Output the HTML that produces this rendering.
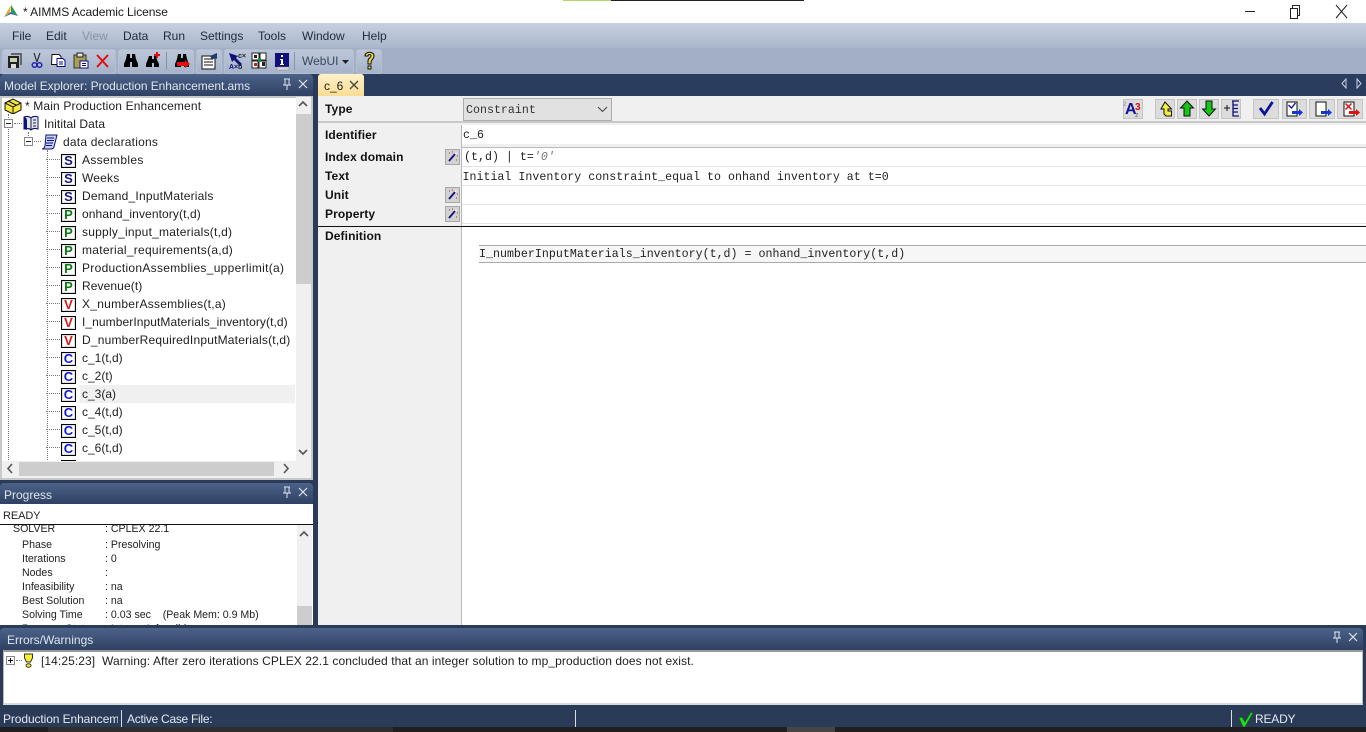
<!DOCTYPE html>
<html><head><meta charset="utf-8">
<style>
html,body{margin:0;padding:0;width:1366px;height:732px;overflow:hidden;background:#2a3b58;font-family:"Liberation Sans",sans-serif;font-size:12px;color:#1a1a1a}
div,span,svg{position:absolute;box-sizing:border-box}
.t{white-space:nowrap;line-height:16px}
.m{top:28px;font-size:12px;color:#1f2a3c}
.hd{background:linear-gradient(#4c6288,#2e4164);border-radius:4px 4px 0 0;}
.ht{color:#dfe5ee;font-size:12px;white-space:nowrap;line-height:16px}
.tb{top:49px;height:25px;background:linear-gradient(#bcc7d9,#a6b3c9);border:1px solid #b4bfd2;border-radius:3px}
.r{left:82px;font-size:12px;white-space:nowrap;line-height:16px;color:#1e1e1e}
.b{left:61px;width:15px;height:14px;border:1px solid #000;background:#fff;box-shadow:inset 0 0 0 1px #ddd;font:bold 13px/12px "Liberation Sans",sans-serif;text-align:center}
.s{color:#15157a}.p{color:#0a7a12}.v{color:#d81818}.c{color:#0a18d8}
.dh{left:46px;width:14px;border-top:1px dotted #777;height:1px}
.lb{left:325px;font:bold 12px/16px "Liberation Sans",sans-serif;color:#111;letter-spacing:.1px}
.mono{font-family:"Liberation Mono",monospace;font-size:11.6px;line-height:14px;white-space:nowrap;color:#222;letter-spacing:.03px}
.wb{left:445px;width:15px;height:16px;background:#d2d2d2;border:1px solid #a8a8a8}
.ib{top:99px;height:20px;background:#dcdcdc;border:1px solid #c4c4c4}
.pg{font-size:10.6px;line-height:14px;white-space:nowrap;color:#222}
.hl{height:1px;background:#e4e4e4}
</style></head><body>

<!-- title bar -->
<div style="left:0;top:0;width:1366px;height:23px;background:#fff"></div>
<div style="left:563px;top:0;width:48px;height:1px;background:#b5d36a"></div>
<div style="left:611px;top:0;width:193px;height:1px;background:#222"></div>
<svg style="left:3px;top:5px" width="16" height="12" viewBox="0 0 16 12"><path d="M8 0L1 12L7 8Z" fill="#e0b030"/><path d="M8 0L15 11L8 7Z" fill="#2a9a50"/><path d="M1 12L8 7L15 11L8 9Z" fill="#2a60b0"/></svg>
<div class="t" style="left:23px;top:4px;color:#1a1a1a;font-size:12px;letter-spacing:-.08px">* AIMMS Academic License</div>
<svg style="left:1240px;top:2px" width="126" height="20" viewBox="0 0 126 20"><path d="M5 9.500H15" stroke="#222" fill="none"/><path d="M50.500 6.500h7v10h-7zM52.500 6.500V3.500h7v10h-2" stroke="#222" fill="none"/><path d="M96 3L107 16M107 3L96 16" stroke="#222" fill="none"/></svg>

<!-- menu -->
<div style="left:0;top:23px;width:1366px;height:25px;background:linear-gradient(#c7d0e1,#aab6cb)"></div>
<div class="t m" style="left:12px">File</div>
<div class="t m" style="left:46px">Edit</div>
<div class="t m" style="left:82px;color:#8a93a3">View</div>
<div class="t m" style="left:123px">Data</div>
<div class="t m" style="left:163px">Run</div>
<div class="t m" style="left:200px">Settings</div>
<div class="t m" style="left:258px">Tools</div>
<div class="t m" style="left:302px">Window</div>
<div class="t m" style="left:362px">Help</div>

<!-- toolbar -->
<div style="left:0;top:48px;width:1366px;height:26px;background:#a2afc6"></div>
<div class="tb" style="left:2px;width:114px"></div>
<div class="tb" style="left:118px;width:76px"></div>
<div class="tb" style="left:196px;width:26px"></div>
<div class="tb" style="left:224px;width:130px"></div>
<div class="tb" style="left:356px;width:26px"></div>
<div style="left:166px;top:52px;width:1px;height:18px;background:#8793a8"></div>
<div style="left:294px;top:52px;width:1px;height:18px;background:#8793a8"></div>
<svg style="left:0;top:48px" width="385" height="26" viewBox="0 0 385 26">
<path d="M8 8h11v12H8z" fill="#222"/><path d="M11 5h11v12h-2V7h-9z" fill="#666"/><path d="M10 10h7v4h-7z" fill="#c8d0b0"/><path d="M11 16h5v4h-5z" fill="#ddd"/>
<path d="M34 5l3 9M40 5l-3 9" stroke="#333" stroke-width="1.200" fill="none"/><circle cx="34.500" cy="17" r="2.300" fill="none" stroke="#1a1ab0" stroke-width="1.400"/><circle cx="39.500" cy="17" r="2.300" fill="none" stroke="#1a1ab0" stroke-width="1.400"/>
<path d="M52 6.500h7l2 2v8H51.500z" fill="#fff" stroke="#111"/><path d="M57 10.500h6l2 2v6h-8z" fill="#fff" stroke="#0a0a90"/><path d="M59 14h4M59 16h4" stroke="#0a0a90"/>
<path d="M74 7h12v13H74z" fill="#a8a050" stroke="#333"/><path d="M77 5h6v4h-6z" fill="#ddd" stroke="#222"/><path d="M80 13h8v7h-8z" fill="#fff" stroke="#0a0a90"/><path d="M82 15.500h4M82 17.500h4" stroke="#0a0a90"/>
<path d="M97 7l11 12M108 7L97 19" stroke="#e01010" stroke-width="2" fill="none"/>
<path d="M127 6h3v4h2V6h3l1 5 2 5v3h-6v-5h-2v5h-6v-3l2-5z" fill="#000"/>
<path d="M149 8h3v3h2V8h2l1 4 2 4v3h-5v-4h-2v4h-6v-3l2-5z" fill="#000"/><path d="M156 4h2v2h2v2h-2v2h-2V8h-2V6h2z" fill="#e01010"/>
<path d="M178 6h3v4h2V6h3l1 5 2 5v3h-5v-4h-3v4h-6v-3l2-5z" fill="#000"/><path d="M177 14h8v-2l5 4-5 4v-2h-8z" fill="#e01010"/>
<path d="M202 8h13v13h-13z" fill="#fff" stroke="#111"/><path d="M204 11h9M204 14h9M204 17h9" stroke="#111"/><path d="M210 8l7-3v6l-2-1-3 2z" fill="#223a70"/>
<path d="M229 5l9 3-2 2 6 6-2 2-6-6-2 2z" fill="#10107a"/><text x="229" y="21" font-family="Liberation Sans" font-size="7" font-weight="bold" fill="#10107a">A×</text><text x="238" y="21" font-family="Liberation Sans" font-size="7" font-weight="bold" fill="#222">b</text><text x="238" y="10" font-family="Liberation Sans" font-size="7" font-weight="bold" fill="#222">c×</text>
<path d="M252 5h7v7h-7zM260 5h6v7h-6zM252 13h6v7h-6zM259 13h7v7h-7z" fill="#fff" stroke="#222"/><path d="M254 7h3v3h-3zM262 14h3v4h-3z" fill="#222"/><path d="M258 10h3v4h-3z" fill="#1a8a3a"/><path d="M254 15h3v3h-3z" fill="#c02020"/>
<path d="M275 5h14v14h-14z" fill="#10107a"/><path d="M281 7h2v2h-2zM280 11h3v5h1v1h-4v-1h1v-4h-1z" fill="#fff"/><path d="M277 19h12v3h-12z" fill="#d8d8d8" stroke="#888" stroke-width=".5"/>
<path d="M365 8c0-5 9-5 9 0 0 3-3 4-3 6v2h-3v-3c0-3 3-3 3-5 0-2-3-2-3 0z" fill="#f4e040" stroke="#111"/><path d="M368 18h3v3h-3z" fill="#f4e040" stroke="#111"/>
</svg>
<div class="t" style="left:302px;top:53px;color:#3a465c">WebUI</div>
<svg style="left:342px;top:60px" width="7" height="4"><path d="M0 0h7L3.500 4z" fill="#222"/></svg>

<!-- model explorer -->
<div class="hd" style="left:0;top:74px;width:313px;height:22px"></div>
<div class="ht" style="left:4px;top:78px;letter-spacing:-.05px">Model Explorer: Production Enhancement.ams</div>
<svg style="left:280px;top:78px" width="30" height="13" viewBox="0 0 30 13"><path d="M4 1h6M5 1v6M9 1v6M3 7h8M7 7v5" stroke="#dfe5ee" fill="none"/><path d="M19 2l8 8M27 2l-8 8" stroke="#dfe5ee" stroke-width="1.200" fill="none"/></svg>
<div style="left:0;top:96px;width:313px;height:384px;background:#fff;border:2px solid #c8c8c8"></div>
<!-- tree lines -->
<div style="left:8px;top:114px;height:346px;border-left:1px dotted #777"></div>
<div style="left:28px;top:132px;height:6px;border-left:1px dotted #777"></div>
<div style="left:47px;top:150px;height:310px;border-left:1px dotted #777"></div>
<svg style="left:3px;top:97px" width="19" height="17" viewBox="0 0 19 17"><path d="M2 6l8-4 8 4v7l-8 4-8-4z" fill="#f6e63a" stroke="#111"/><path d="M2 6l8 4 8-4M10 10v7M5 4l8 4" stroke="#111" fill="none"/></svg>
<div class="t" style="left:25px;top:98px;color:#1e1e1e;letter-spacing:.14px">* Main Production Enhancement</div>
<div style="left:4px;top:119px;width:9px;height:9px;border:1px solid #888;background:#fff"></div><div style="left:6px;top:123px;width:5px;height:1px;background:#222"></div>
<div class="dh" style="left:14px;top:123px;width:8px"></div>
<svg style="left:23px;top:115px" width="16" height="17" viewBox="0 0 16 17"><path d="M1 2c3-1 5-1 7 1 2-2 4-2 7-1v12c-3-1-5-1-7 1-2-2-4-2-7-1z" fill="#dfe4f4" stroke="#10107a"/><path d="M1 2c2 0 3 2 3 4v9l-3-1z" fill="#10107a"/><path d="M8 3v12M10 5h3M10 8h3M10 11h3" stroke="#222" fill="none"/></svg>
<div class="t" style="left:44px;top:116px;color:#1e1e1e;letter-spacing:.08px">Initital Data</div>
<div style="left:24px;top:137px;width:9px;height:9px;border:1px solid #888;background:#fff"></div><div style="left:26px;top:141px;width:5px;height:1px;background:#222"></div>
<div class="dh" style="left:34px;top:141px;width:7px"></div>
<svg style="left:41px;top:134px" width="17" height="16" viewBox="0 0 17 16"><path d="M5 1h11l-3 12c-1 2-2 2-3 2H1c2 0 2-1 3-3z" fill="#c8d0f0" stroke="#10107a"/><path d="M6 4h7M6 6.500h7M5 9h7M5 11.500h6" stroke="#10107a"/></svg>
<div class="t" style="left:63px;top:134px;color:#1e1e1e;letter-spacing:.22px">data declarations</div>

<div class="dh" style="top:159px"></div><div class="b s" style="top:154px">S</div><div class="r" style="top:152px;letter-spacing:.33px">Assembles</div>
<div class="dh" style="top:177px"></div><div class="b s" style="top:172px">S</div><div class="r" style="top:170px;letter-spacing:.2px">Weeks</div>
<div class="dh" style="top:195px"></div><div class="b s" style="top:190px">S</div><div class="r" style="top:188px;letter-spacing:.2px">Demand_InputMaterials</div>
<div class="dh" style="top:213px"></div><div class="b p" style="top:208px">P</div><div class="r" style="top:206px;letter-spacing:.1px">onhand_inventory(t,d)</div>
<div class="dh" style="top:231px"></div><div class="b p" style="top:226px">P</div><div class="r" style="top:224px;letter-spacing:.23px">supply_input_materials(t,d)</div>
<div class="dh" style="top:249px"></div><div class="b p" style="top:244px">P</div><div class="r" style="top:242px;letter-spacing:.27px">material_requirements(a,d)</div>
<div class="dh" style="top:267px"></div><div class="b p" style="top:262px">P</div><div class="r" style="top:260px;letter-spacing:.3px">ProductionAssemblies_upperlimit(a)</div>
<div class="dh" style="top:285px"></div><div class="b p" style="top:280px">P</div><div class="r" style="top:278px;letter-spacing:.1px">Revenue(t)</div>
<div class="dh" style="top:303px"></div><div class="b v" style="top:298px">V</div><div class="r" style="top:296px;letter-spacing:.26px">X_numberAssemblies(t,a)</div>
<div class="dh" style="top:321px"></div><div class="b v" style="top:316px">V</div><div class="r" style="top:314px;letter-spacing:.08px">I_numberInputMaterials_inventory(t,d)</div>
<div class="dh" style="top:339px"></div><div class="b v" style="top:334px">V</div><div class="r" style="top:332px;letter-spacing:.2px">D_numberRequiredInputMaterials(t,d)</div>
<div class="dh" style="top:357px"></div><div class="b c" style="top:352px">C</div><div class="r" style="top:350px">c_1(t,d)</div>
<div class="dh" style="top:375px"></div><div class="b c" style="top:370px">C</div><div class="r" style="top:368px">c_2(t)</div>
<div style="left:80px;top:385px;width:215px;height:18px;background:#f0f0f0"></div>
<div class="dh" style="top:393px"></div><div class="b c" style="top:388px">C</div><div class="r" style="top:386px">c_3(a)</div>
<div class="dh" style="top:411px"></div><div class="b c" style="top:406px">C</div><div class="r" style="top:404px">c_4(t,d)</div>
<div class="dh" style="top:429px"></div><div class="b c" style="top:424px">C</div><div class="r" style="top:422px">c_5(t,d)</div>
<div class="dh" style="top:447px"></div><div class="b c" style="top:442px">C</div><div class="r" style="top:440px">c_6(t,d)</div>
<div style="left:61px;top:460px;width:15px;height:1px;background:#000"></div>
<!-- tree scrollbars -->
<div style="left:296px;top:97px;width:15px;height:364px;background:#f0f0f0"></div>
<div style="left:296px;top:114px;width:15px;height:170px;background:#cdcdcd"></div>
<svg style="left:297px;top:100px" width="12" height="8"><path d="M2 6l4-4 4 4" stroke="#555" stroke-width="1.600" fill="none"/></svg>
<svg style="left:297px;top:448px" width="12" height="8"><path d="M2 2l4 4 4-4" stroke="#555" stroke-width="1.600" fill="none"/></svg>
<div style="left:2px;top:461px;width:309px;height:17px;background:#f0f0f0"></div>
<div style="left:19px;top:462px;width:255px;height:14px;background:#cdcdcd"></div>
<svg style="left:6px;top:463px" width="8" height="11"><path d="M6 1L2 5.500l4 4.500" stroke="#555" stroke-width="1.600" fill="none"/></svg>
<svg style="left:282px;top:463px" width="8" height="11"><path d="M2 1l4 4.500L2 10" stroke="#555" stroke-width="1.600" fill="none"/></svg>

<!-- progress -->
<div class="hd" style="left:0;top:483px;width:313px;height:21px"></div>
<div class="ht" style="left:4px;top:487px">Progress</div>
<svg style="left:280px;top:486px" width="30" height="13" viewBox="0 0 30 13"><path d="M4 1h6M5 1v6M9 1v6M3 7h8M7 7v5" stroke="#dfe5ee" fill="none"/><path d="M19 2l8 8M27 2l-8 8" stroke="#dfe5ee" stroke-width="1.200" fill="none"/></svg>
<div style="left:0;top:504px;width:313px;height:121px;background:#fff"></div>
<div class="t" style="left:3px;top:508px;font-size:11px;color:#222;letter-spacing:-.1px">READY</div>
<div class="pg" style="left:13px;top:525px;height:12px;overflow:hidden;line-height:9px">SOLVER</div><div class="pg" style="left:105px;top:525px;height:12px;overflow:hidden;line-height:9px">: CPLEX 22.1</div>
<div style="left:0;top:524px;width:313px;height:1px;background:#111"></div>
<div class="pg" style="left:22px;top:538px">Phase</div><div class="pg" style="left:105px;top:538px">: Presolving</div>
<div class="pg" style="left:22px;top:552px">Iterations</div><div class="pg" style="left:105px;top:552px">: 0</div>
<div class="pg" style="left:22px;top:566px">Nodes</div><div class="pg" style="left:105px;top:566px">:</div>
<div class="pg" style="left:22px;top:580px">Infeasibility</div><div class="pg" style="left:105px;top:580px">: na</div>
<div class="pg" style="left:22px;top:594px">Best Solution</div><div class="pg" style="left:105px;top:594px">: na</div>
<div class="pg" style="left:22px;top:608px">Solving Time</div><div class="pg" style="left:105px;top:608px">: 0.03 sec &nbsp;&nbsp;&nbsp;(Peak Mem: 0.9 Mb)</div>
<div class="pg" style="left:22px;top:622px;height:3px;overflow:hidden">Program Status</div><div class="pg" style="left:105px;top:622px;height:3px;overflow:hidden">: Integer Infeasible</div>
<div style="left:297px;top:525px;width:15px;height:100px;background:#f0f0f0"></div>
<div style="left:297px;top:606px;width:15px;height:19px;background:#cdcdcd"></div>
<svg style="left:298px;top:530px" width="12" height="8"><path d="M2 6l4-4 4 4" stroke="#555" stroke-width="1.600" fill="none"/></svg>

<!-- editor -->
<div style="left:318px;top:74px;width:1048px;height:22px;background:#2b3d5e"></div>
<div style="left:318px;top:74px;width:46px;height:22px;background:linear-gradient(#fff1c9,#fbdc94);border-radius:3px 3px 0 0"></div>
<div class="t" style="left:324px;top:78px;color:#222">c_6</div>
<svg style="left:349px;top:80px" width="10" height="10"><path d="M1 1l8 8M9 1L1 9" stroke="#444" stroke-width="1.300"/></svg>
<svg style="left:1340px;top:78px" width="24" height="11"><path d="M6 1L2 5.500 6 10zM17 1l4 4.500L17 10z" fill="none" stroke="#c8d0e0"/></svg>
<div style="left:318px;top:96px;width:1048px;height:529px;background:#f0f0f0"></div>
<div style="left:462px;top:227px;width:904px;height:398px;background:#fff"></div>
<div style="left:461px;top:125px;width:1px;height:500px;background:#b8b8b8"></div>
<div style="left:318px;top:121px;width:1048px;height:2px;background:#c8c8c8"></div>
<div class="lb" style="left:325px;top:101px">Type</div>
<div style="left:463px;top:98px;width:149px;height:23px;background:#e1e1e1;border:1px solid #adadad"></div>
<div class="mono" style="left:466px;top:104px;color:#333">Constraint</div>
<svg style="left:597px;top:106px" width="11" height="7"><path d="M1 1l4.500 4.500L10 1" stroke="#444" fill="none"/></svg>

<div style="left:462px;top:125px;width:904px;height:19px;background:#fff"></div>
<div style="left:462px;top:147px;width:904px;height:78px;background:#fff"></div>
<div class="hl" style="left:462px;top:147px;width:904px;background:#bbb"></div>
<div class="hl" style="left:462px;top:166px;width:904px"></div>
<div class="hl" style="left:462px;top:185px;width:904px"></div>
<div class="hl" style="left:462px;top:204px;width:904px"></div>
<div class="hl" style="left:462px;top:223px;width:904px"></div>
<div class="lb" style="top:127px">Identifier</div>
<div class="mono" style="left:463px;top:129px">c_6</div>
<div class="lb" style="top:149px">Index domain</div>
<div class="mono" style="left:464px;top:151px">(t,d) | t=<span style="position:static;color:#777;font-style:italic">'0'</span></div>
<div class="lb" style="top:168px">Text</div>
<div class="mono" style="left:462.500px;top:171px">Initial Inventory constraint_equal to onhand inventory at t=0</div>
<div class="lb" style="top:187px">Unit</div>
<div class="lb" style="top:206px">Property</div>
<div class="wb" style="top:149px"></div><div class="wb" style="top:187px"></div><div class="wb" style="top:206px"></div>
<svg style="left:445px;top:149px" width="15" height="16"><path d="M4 12L10 5" stroke="#10107a" stroke-width="1.800"/><path d="M10 5l1.500-1.500" stroke="#fff" stroke-width="1.500"/><path d="M4 4h1M11 11h1M12 7h1M7 3h1" stroke="#a03030"/></svg>
<svg style="left:445px;top:187px" width="15" height="16"><path d="M4 12L10 5" stroke="#10107a" stroke-width="1.800"/><path d="M10 5l1.500-1.500" stroke="#fff" stroke-width="1.500"/><path d="M4 4h1M11 11h1M12 7h1M7 3h1" stroke="#a03030"/></svg>
<svg style="left:445px;top:206px" width="15" height="16"><path d="M4 12L10 5" stroke="#10107a" stroke-width="1.800"/><path d="M10 5l1.500-1.500" stroke="#fff" stroke-width="1.500"/><path d="M4 4h1M11 11h1M12 7h1M7 3h1" stroke="#a03030"/></svg>
<div style="left:318px;top:226px;width:1048px;height:1px;background:#111"></div>
<div class="lb" style="top:228px">Definition</div>
<div style="left:479px;top:245px;width:887px;height:1px;background:#aaa"></div>
<div style="left:479px;top:262px;width:887px;height:1px;background:#aaa"></div>
<div style="left:479px;top:246px;width:887px;height:16px;background:#f6f6f6"></div>
<div class="mono" style="left:479px;top:248px">I_numberInputMaterials_inventory(t,d) = onhand_inventory(t,d)</div>

<!-- right icon buttons -->
<div class="ib" style="left:1123px;width:20px"></div>
<div class="ib" style="left:1155px;width:20px"></div>
<div class="ib" style="left:1177px;width:20px"></div>
<div class="ib" style="left:1199px;width:20px"></div>
<div class="ib" style="left:1221px;width:20px"></div>
<div class="ib" style="left:1253px;width:26px"></div>
<div class="ib" style="left:1282px;width:25px"></div>
<div class="ib" style="left:1309px;width:26px"></div>
<div class="ib" style="left:1337px;width:26px"></div>
<svg style="left:1120px;top:97px" width="246" height="24" viewBox="0 0 246 24">
<text x="5" y="17" font-family="Liberation Sans" font-size="16" font-weight="bold" fill="#10109a">A</text><text x="15" y="13" font-family="Liberation Sans" font-size="10" font-weight="bold" fill="#d01010">3</text><text x="15" y="20" font-family="Liberation Sans" font-size="7" fill="#666">z</text><text x="3" y="9" font-family="Liberation Sans" font-size="6" fill="#888">2</text>
<path d="M45 5l6.500 7H48v2h3.500v5H46l-2-2v-5h-3z" fill="#f4f040" stroke="#111"/>
<path d="M67 4l6.500 7H70v8h-6v-8h-3.500z" fill="#16c616" stroke="#111"/>
<path d="M86 4h6v8h3.500L89 19l-6.500-7H86z" fill="#16c616" stroke="#111"/>
<path d="M104 11h6M107 8v6" stroke="#111"/><path d="M112 4h7M113 4v15h6M113 8h5M113 11.500h5M113 15h5" stroke="#10107a" stroke-width="1.300" fill="none"/>
<path d="M140 11l4.500 6 8-12" stroke="#10109a" stroke-width="2.800" fill="none"/>
<path d="M167 5h10v14h-10z" fill="#fff" stroke="#111"/><path d="M168.500 8l3 3 4-5" stroke="#10109a" stroke-width="1.400" fill="none"/><path d="M172 14h7v-2l4 3.500-4 3.500v-2h-7z" fill="#1038d8"/>
<path d="M196 5h10v14h-10z" fill="#fff" stroke="#111"/><path d="M201 14h7v-2l4 3.500-4 3.500v-2h-7z" fill="#1038d8"/>
<path d="M224 5h10v14h-10z" fill="#fff" stroke="#111"/><path d="M225.500 6.500l6 6M231.500 6.500l-6 6" stroke="#e01010" stroke-width="1.500"/><path d="M229 14h7v-2l4 3.500-4 3.500v-2h-7z" fill="#e01010"/>
</svg>

<!-- errors -->
<div style="left:0;top:625px;width:1366px;height:107px;background:#2a3b58"></div>
<div class="hd" style="left:0;top:628px;width:1363px;height:22px"></div>
<div class="ht" style="left:7px;top:632px">Errors/Warnings</div>
<svg style="left:1330px;top:631px" width="30" height="13" viewBox="0 0 30 13"><path d="M4 1h6M5 1v6M9 1v6M3 7h8M7 7v5" stroke="#dfe5ee" fill="none"/><path d="M19 2l8 8M27 2l-8 8" stroke="#dfe5ee" stroke-width="1.200" fill="none"/></svg>
<div style="left:3px;top:650px;width:1360px;height:55px;background:#fff;border:1px solid #b8b8b8;border-top:2px solid #999;border-bottom:2px solid #d5d9e0"></div>
<div style="left:6px;top:656px;width:9px;height:9px;border:1px solid #888;background:#fff"></div><div style="left:8px;top:660px;width:5px;height:1px;background:#111"></div><div style="left:10px;top:658px;width:1px;height:5px;background:#111"></div>
<div class="dh" style="left:16px;top:660px;width:6px"></div>
<svg style="left:23px;top:653px" width="11" height="15" viewBox="0 0 11 15"><path d="M1.500 1h8v4l-2 4h-4l-2-4z" fill="#f6ee30" stroke="#333"/><ellipse cx="5.500" cy="12.500" rx="2.500" ry="1.800" fill="#f6ee30" stroke="#333"/></svg>
<div class="t" style="left:41px;top:653px;color:#1e1e1e;letter-spacing:.08px">[14:25:23]&nbsp; Warning: After zero iterations CPLEX 22.1 concluded that an integer solution to mp_production does not exist.</div>

<!-- status -->
<div class="t" style="left:3px;top:711px;color:#e4e8f0;width:115px;overflow:hidden;letter-spacing:-.1px">Production Enhancement</div>
<div style="left:121px;top:710px;width:1px;height:17px;background:#d8dce4"></div>
<div class="t" style="left:127px;top:711px;color:#e4e8f0;letter-spacing:-.28px">Active Case File:</div>
<div style="left:575px;top:710px;width:1px;height:17px;background:#d8dce4"></div>
<div style="left:1231px;top:710px;width:1px;height:17px;background:#d8dce4"></div>
<svg style="left:1238px;top:711px" width="15" height="16" viewBox="0 0 15 16"><path d="M1 7l3-1 3 5 6-10 2 1-8 14H5z" fill="#26d826" stroke="#0a5a0a" stroke-width=".6"/></svg>
<div class="t" style="left:1255px;top:711px;color:#e4e8f0;letter-spacing:-.2px">READY</div>
<div style="left:0;top:727px;width:1366px;height:5px;background:#1f1f1f"></div>
<div style="left:48px;top:727px;width:345px;height:5px;background:#2e2e2e"></div>
<div style="left:787px;top:727px;width:48px;height:5px;background:#454545"></div>
</body></html>
